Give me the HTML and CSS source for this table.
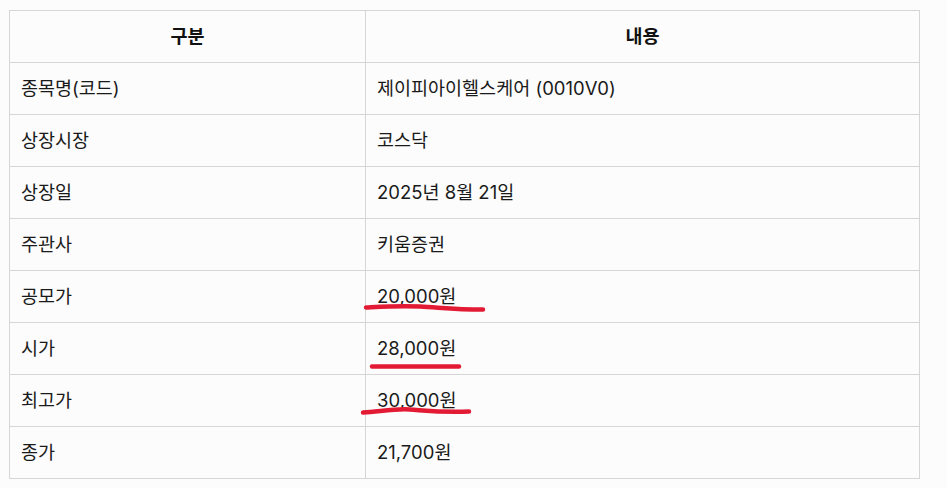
FILE: index.html
```html
<!DOCTYPE html>
<html lang="ko">
<head>
<meta charset="utf-8">
<title>공모주 정보</title>
<link rel="stylesheet" href="styles.css">
</head>
<body>
<div class="wrap">
  <table class="info">
    <colgroup><col class="c1"><col class="c2"></colgroup>
    <thead>
      <tr><th>구분</th><th>내용</th></tr>
    </thead>
    <tbody>
      <tr><td>종목명(코드)</td><td>제이피아이헬스케어 (0010V0)</td></tr>
      <tr><td>상장시장</td><td>코스닥</td></tr>
      <tr><td>상장일</td><td>2025년 8월 21일</td></tr>
      <tr><td>주관사</td><td>키움증권</td></tr>
      <tr><td>공모가</td><td>20,000원</td></tr>
      <tr><td>시가</td><td>28,000원</td></tr>
      <tr><td>최고가</td><td>30,000원</td></tr>
      <tr><td>종가</td><td>21,700원</td></tr>
    </tbody>
  </table>
  <svg class="marks" width="947" height="488" viewBox="0 0 947 488" aria-hidden="true">
    <path d="M366 307.5 C 385 306.5, 400 305.5, 420 306.5 S 455 309.5, 483 309.5" />
    <path d="M372 366.5 L 459 366.5" />
    <path d="M363 412.5 C 380 411.5, 395 408.5, 410 409.5 S 440 412.5, 469 411.5" />
  </svg>
</div>
</body>
</html>
```

FILE: styles.css
```css
html, body {
  margin: 0;
  padding: 0;
  background: #fcfcfc;
}
body {
  font-family: Inter, "Noto Sans CJK KR", sans-serif;
  color: #1a1a1a;
}
.wrap {
  position: relative;
  width: 947px;
  height: 488px;
  padding: 10px 0 0 9px;
  box-sizing: border-box;
}
.info {
  border-collapse: collapse;
  width: 910px;
  table-layout: fixed;
  font-size: 18.5px;
}
.c1 { width: 356px; }
.c2 { width: 554px; }
.info th,
.info td {
  border: 1px solid #d6d6d6;
  height: 52px;
  padding: 0 11px 2px;
  box-sizing: border-box;
  line-height: 26px;
}
.info th {
  font-weight: 700;
  text-align: center;
  color: #111;
}
.info td {
  text-align: left;
  font-weight: 400;
}
.marks {
  position: absolute;
  top: 0;
  left: 0;
  pointer-events: none;
}
.marks path {
  fill: none;
  stroke: #e31a33;
  stroke-width: 4.5;
  stroke-linecap: round;
  stroke-linejoin: round;
}
```
